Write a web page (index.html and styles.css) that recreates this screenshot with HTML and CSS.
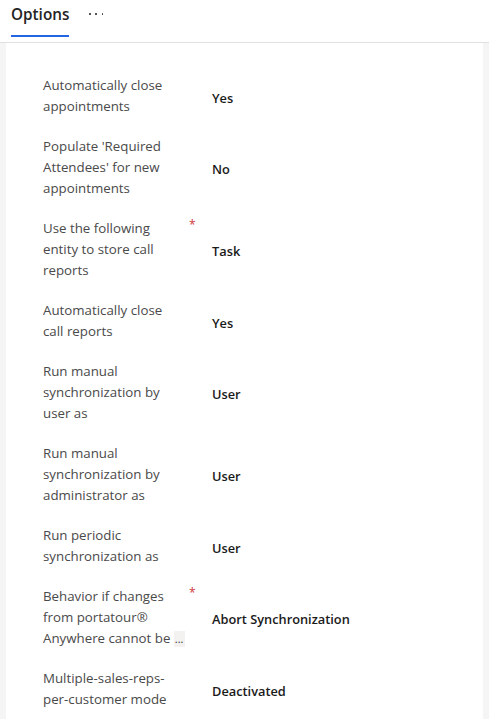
FILE: index.html
```html
<!DOCTYPE html>
<html lang="en">
<head>
<meta charset="utf-8">
<title>Options</title>
<link rel="stylesheet" href="styles.css">
</head>
<body>
<header class="tabbar">
  <div class="tab tab-active">Options</div>
  <div class="tab-more" aria-label="More tabs"><span class="dot"></span><span class="dot"></span><span class="dot"></span></div>
</header>
<main class="page">
  <section class="card">
    <div class="row">
      <div class="label">Automatically close appointments</div>
      <div class="req"></div>
      <div class="value">Yes</div>
    </div>
    <div class="row">
      <div class="label">Populate 'Required Attendees' for new appointments</div>
      <div class="req"></div>
      <div class="value">No</div>
    </div>
    <div class="row">
      <div class="label">Use the following entity to store call reports</div>
      <div class="req">*</div>
      <div class="value">Task</div>
    </div>
    <div class="row">
      <div class="label">Automatically close call reports</div>
      <div class="req"></div>
      <div class="value">Yes</div>
    </div>
    <div class="row">
      <div class="label">Run manual synchronization by user as</div>
      <div class="req"></div>
      <div class="value">User</div>
    </div>
    <div class="row">
      <div class="label">Run manual synchronization by administrator as</div>
      <div class="req"></div>
      <div class="value">User</div>
    </div>
    <div class="row">
      <div class="label">Run periodic synchronization as</div>
      <div class="req"></div>
      <div class="value">User</div>
    </div>
    <div class="row">
      <div class="label">Behavior if changes from portatour® Anywhere cannot&nbsp;be&nbsp;<span class="more-btn">...</span></div>
      <div class="req">*</div>
      <div class="value">Abort Synchronization</div>
    </div>
    <div class="row">
      <div class="label">Multiple-sales-reps-per-customer mode</div>
      <div class="req"></div>
      <div class="value">Deactivated</div>
    </div>
  </section>
</main>
</body>
</html>
```

FILE: styles.css
```css
html, body {
  margin: 0;
  padding: 0;
}
body {
  background: #f5f5f5;
  font-family: "Open Sans", "Noto Sans", "Liberation Sans", sans-serif;
  color: #242424;
  width: 489px;
  height: 719px;
  overflow: hidden;
}
.tabbar {
  height: 42px;
  background: #ffffff;
  border-bottom: 1px solid #e0e0e0;
  display: flex;
  align-items: flex-start;
  padding-left: 11px;
  box-sizing: content-box;
}
.tab {
  font-size: 15.3px;
  font-weight: 600;
  line-height: 22px;
  padding-top: 3px;
  padding-bottom: 10px;
  color: #242424;
}
.tab-active {
  border-bottom: 2px solid #2266e3;
}
.tab-more {
  display: flex;
  gap: 4.5px;
  margin-left: 20px;
  padding-top: 13px;
}
.dot {
  width: 1.6px;
  height: 1.6px;
  border-radius: 50%;
  background: #333;
}
.page {
  padding: 0 6px;
}
.card {
  background: #ffffff;
  padding: 22px 20px 0 37px;
  min-height: 700px;
}
.row {
  display: flex;
  align-items: center;
  padding: 10px 0 9px;
}
.label {
  width: 138px;
  margin-right: 7px;
  font-size: 13.3px;
  line-height: 21px;
  color: #4a4a4a;
  flex: none;
}
.req {
  width: 24px;
  flex: none;
  align-self: flex-start;
  color: #d13438;
  font-size: 12px;
  line-height: 14px;
  padding-left: 1px;
  box-sizing: border-box;
}
.value {
  font-size: 12.8px;
  font-weight: 600;
  color: #1a1a1a;
  padding-top: 3px;
}
.more-btn {
  display: inline-block;
  background: #f3f2f1;
  font-size: 11px;
  line-height: 16px;
  padding: 0 1px;
  margin-right: -12px;
  color: #333;
  vertical-align: middle;
}
```
